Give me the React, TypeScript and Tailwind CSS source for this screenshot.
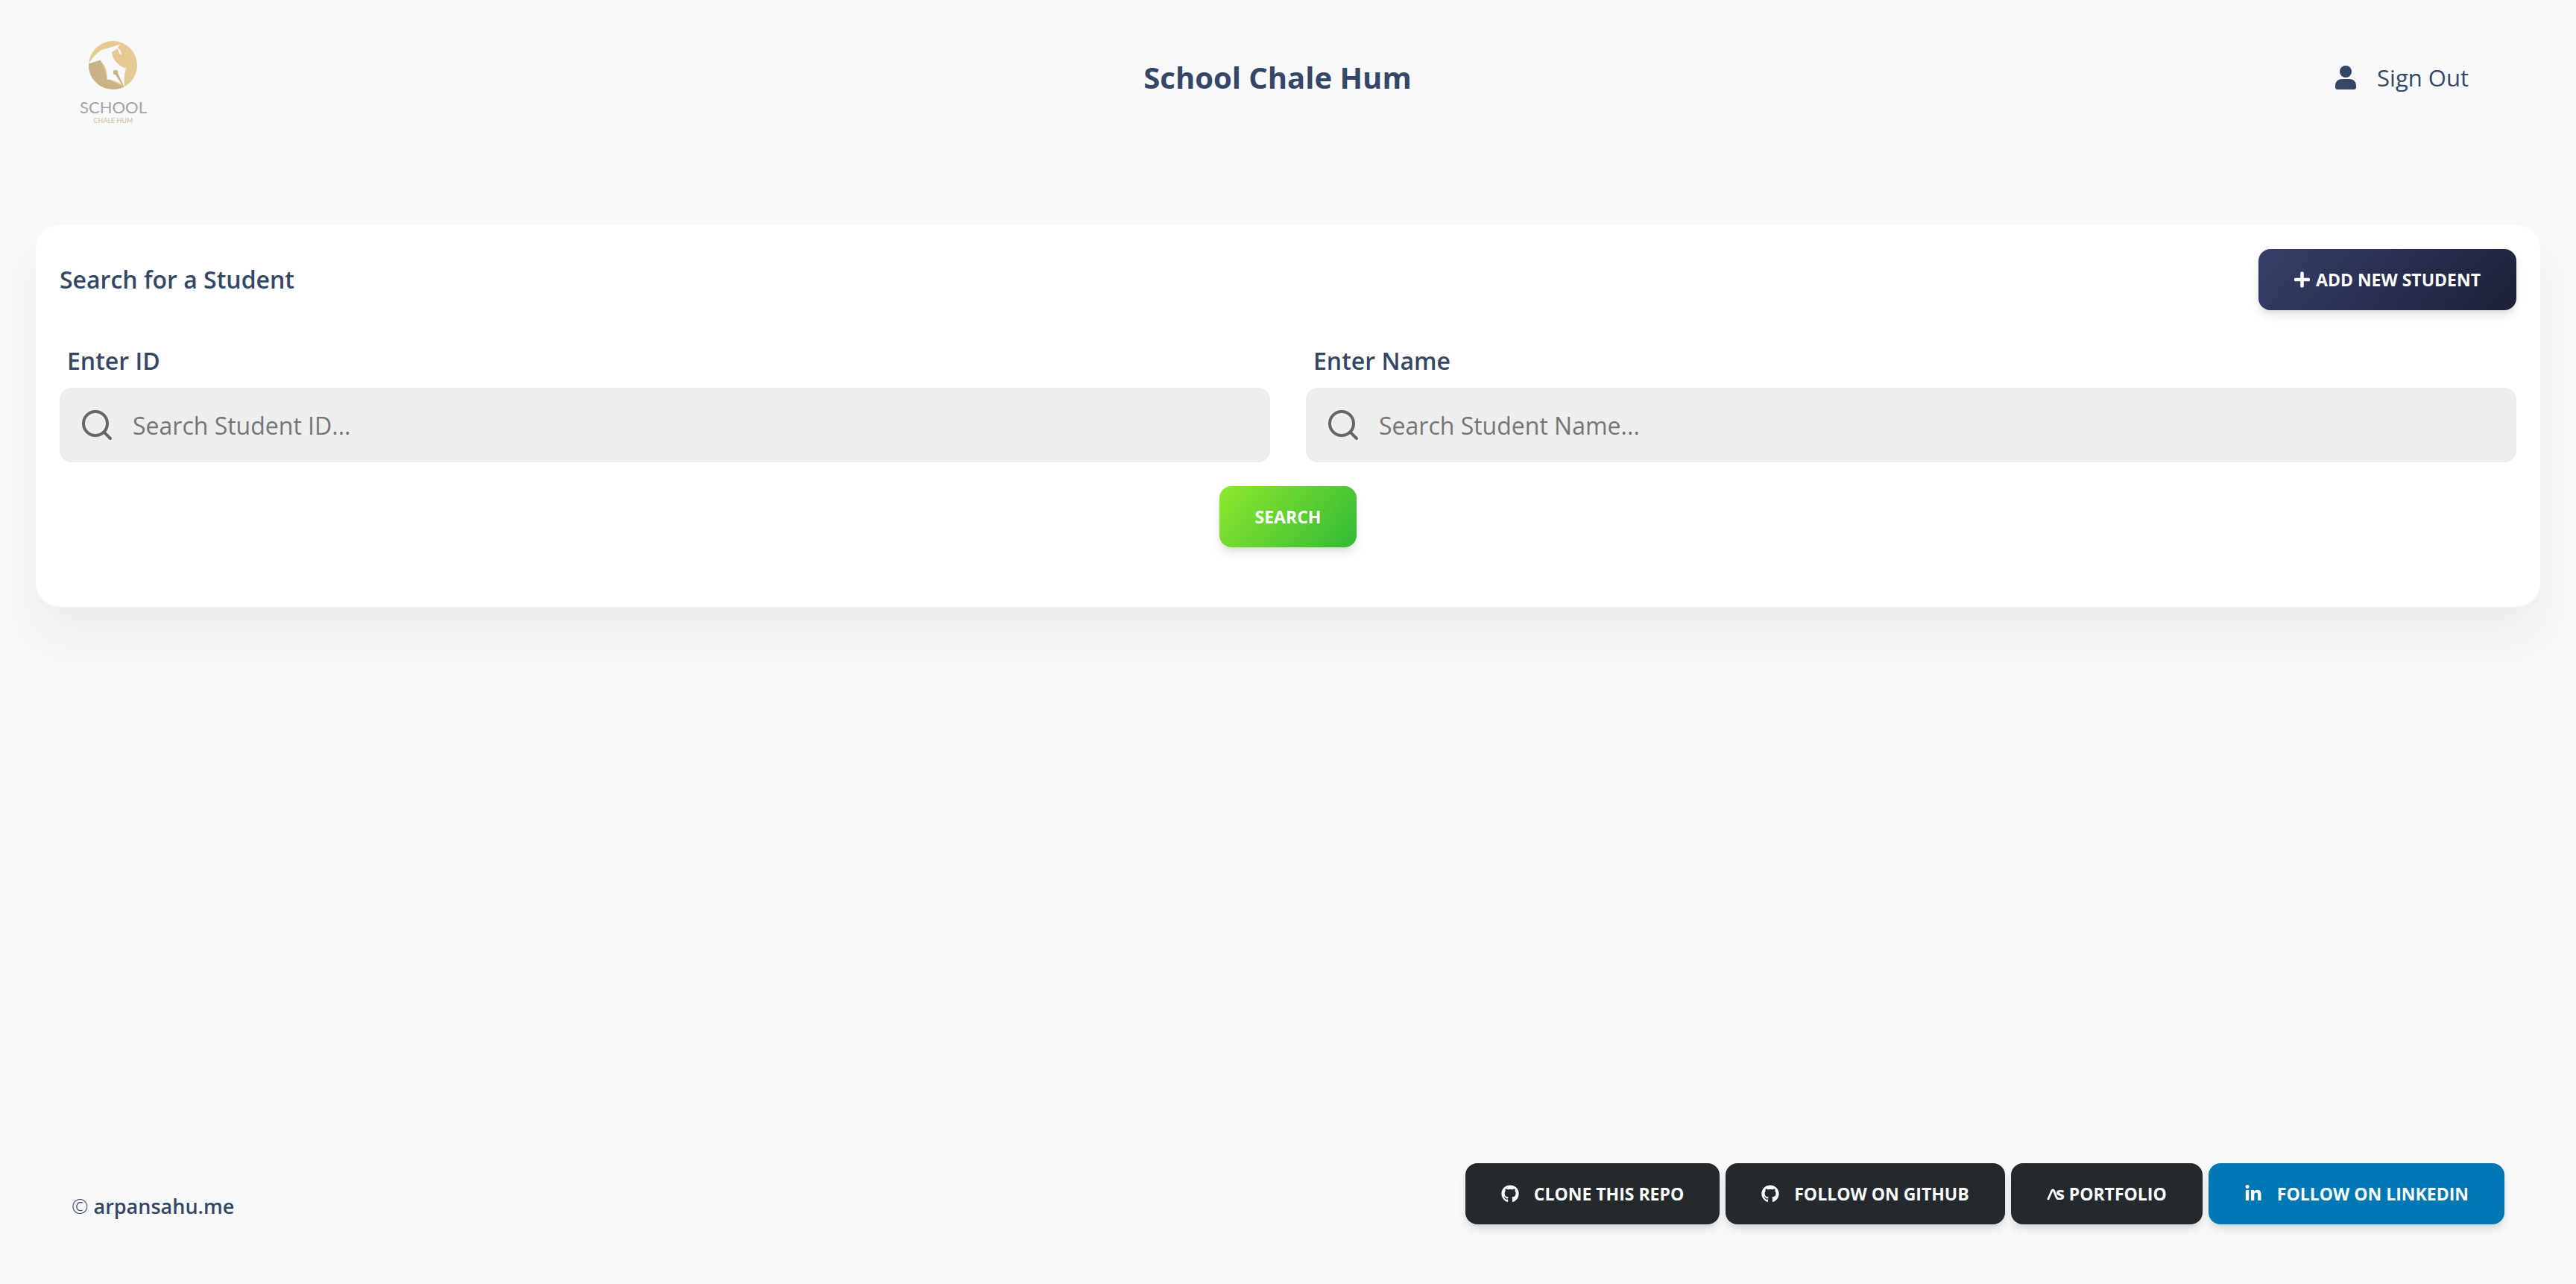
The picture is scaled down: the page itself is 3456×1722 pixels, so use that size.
import React, { useState } from "react";
import { FaGithub, FaLinkedinIn, FaPlus } from "react-icons/fa";
import { FiSearch } from "react-icons/fi";

const buttonBase =
  "inline-flex h-[82px] items-center justify-center rounded-2xl text-[23px] font-bold uppercase text-white shadow-[0_8px_14px_-2px_rgba(0,0,0,0.11),0_4px_8px_-2px_rgba(0,0,0,0.07)]";

const Logo = () => (
  <svg className="h-[140px] w-22 overflow-visible" viewBox="28 0 88 140" role="img" aria-label="School Chale Hum">
    <circle cx="71.5" cy="47.5" r="32.5" fill="#e5cb93" />
    <path d="M39 45.500 55 39l9 26.500L86 76.500C68 86 38 74 39 45.500Z" fill="#c9b385" />
    <path
      d="M39 45.500C44 37 51 30 56 27L82 19.500 78 23.500 81.500 28 83.500 33.500 80.500 32 77.500 25 70 30C71 40 79 49 89 51.500C86.500 60 86.500 68 87 76C80 70 72 67 63.500 66.500C64.500 58 62 50 59.500 47L58 45.500 54.500 40.500Z"
      fill="#f8f9fa"
    />
    <circle cx="75" cy="57" r="3.200" fill="#c9b385" />
    <path d="M74 58 86 76.500 77 57Z" stroke="#c9b385" fill="#c9b385" />
    <text x="72" y="112" textAnchor="middle" fontFamily="Lato, sans-serif" fontSize="22" fill="#a3a3a3">
      SCHOOL
    </text>
    <text x="72" y="125" textAnchor="middle" fontFamily="Lato, sans-serif" fontSize="9" fill="#d3bd8f">
      CHALE HUM
    </text>
  </svg>
);

const UserIcon = () => (
  <svg className="h-8 w-7" viewBox="0 0 28 32" fill="currentColor" aria-hidden="true">
    <circle cx="14" cy="8" r="8" />
    <path d="M9 18h10c6 0 9 4 9 9v2c0 2-1 3-3 3H3c-2 0-3-1-3-3v-2c0-5 3-9 9-9Z" />
  </svg>
);

const PortfolioIcon = () => (
  <svg className="h-6 w-6 overflow-visible" viewBox="0 0 24 24" aria-hidden="true">
    <path
      d="M1.500 20 6.500 8.500c1-2 2.500-2 3.300 0l2.700 7c1 2.500 1.500 3 3 3"
      fill="none"
      stroke="currentColor"
      strokeWidth="2.800"
    />
    <text x="12" y="20" className="text-[24px] normal-case" fill="currentColor">
      s
    </text>
  </svg>
);

interface SearchFieldProps {
  id: string;
  label: string;
  placeholder: string;
  value: string;
  onChange: (value: string) => void;
}

const SearchField = ({ id, label, placeholder, value, onChange }: SearchFieldProps) => (
  <div className="flex flex-col">
    <label htmlFor={id} className="mb-4 ml-2.5 text-[32px] leading-10 font-semibold">
      {label}
    </label>
    <div className="flex h-[100px] items-center gap-6 rounded-2xl bg-[#eeeeee] px-[26px]">
      <FiSearch className="h-12 w-12 shrink-0 text-[#666666]" aria-hidden="true" />
      <input
        id={id}
        type="text"
        className="h-full w-full bg-transparent text-[32px] outline-none placeholder:text-[#757575]"
        placeholder={placeholder}
        value={value}
        onChange={(e) => onChange(e.target.value)}
      />
    </div>
  </div>
);

const App = () => {
  const [studentId, setStudentId] = useState("");
  const [studentName, setStudentName] = useState("");

  const handleSearch = (event: React.FormEvent) => {
    event.preventDefault();
  };

  return (
    <div className="flex min-h-screen flex-col bg-[#f8f9fa] font-['Open_Sans',sans-serif] text-[#344767]">
      <header className="grid grid-cols-[1fr_auto_1fr] items-start pt-10 pr-36 pl-[108px]">
        <a href="#home" className="justify-self-start">
          <Logo />
        </a>
        <h1 className="pt-9 pl-2 text-[40px] leading-[56px] font-bold">School Chale Hum</h1>
        <a
          href="#signout"
          className="flex items-center gap-7 justify-self-end pt-10 text-[31px] leading-12"
        >
          <UserIcon />
          Sign Out
        </a>
      </header>

      <main className="px-12 pt-[122px]">
        <form
          onSubmit={handleSearch}
          className="rounded-[32px] bg-white px-8 pt-8 pb-20 shadow-[0_40px_54px_0_rgba(0,0,0,0.05)]"
        >
          <div className="flex items-center justify-between">
            <h2 className="text-[32px] font-semibold">Search for a Student</h2>
            <button
              type="button"
              className={`${buttonBase} gap-2 bg-[linear-gradient(310deg,#141727,#3a416f)] bg-[length:150%] bg-[position:25%] px-12`}
            >
              <FaPlus className="h-6 w-[21px]" aria-hidden="true" />
              Add New Student
            </button>
          </div>
          <div className="mt-12 grid grid-cols-2 gap-12">
            <SearchField
              id="student-id"
              label="Enter ID"
              placeholder="Search Student ID..."
              value={studentId}
              onChange={setStudentId}
            />
            <SearchField
              id="student-name"
              label="Enter Name"
              placeholder="Search Student Name..."
              value={studentName}
              onChange={setStudentName}
            />
          </div>
          <div className="mt-8 flex justify-center">
            <button
              type="submit"
              className={`${buttonBase} bg-[linear-gradient(310deg,#17ad37,#98ec2d)] bg-[length:150%] bg-[position:25%] px-12`}
            >
              Search
            </button>
          </div>
        </form>
      </main>

      <footer className="mt-auto flex items-end justify-between px-24 pb-20">
        <p className="text-[27px] leading-[48px]">
          <span className="font-light">©</span>{" "}
          <a href="#arpansahu" className="font-semibold">
            arpansahu.me
          </a>
        </p>
        <div className="flex gap-2">
          <a href="#repo" className={`${buttonBase} gap-5 bg-[#24292e] px-12`}>
            <FaGithub className="h-6 w-6" aria-hidden="true" />
            Clone this repo
          </a>
          <a href="#github" className={`${buttonBase} gap-5 bg-[#24292e] px-12`}>
            <FaGithub className="h-6 w-6" aria-hidden="true" />
            Follow on Github
          </a>
          <a href="#portfolio" className={`${buttonBase} gap-1.5 bg-[#24292e] px-12`}>
            <PortfolioIcon />
            Portfolio
          </a>
          <a href="#linkedin" className={`${buttonBase} gap-5 bg-[#0077b5] px-12`}>
            <FaLinkedinIn className="h-6 w-6" aria-hidden="true" />
            Follow on LinkedIn
          </a>
        </div>
      </footer>
    </div>
  );
};

export default App;
